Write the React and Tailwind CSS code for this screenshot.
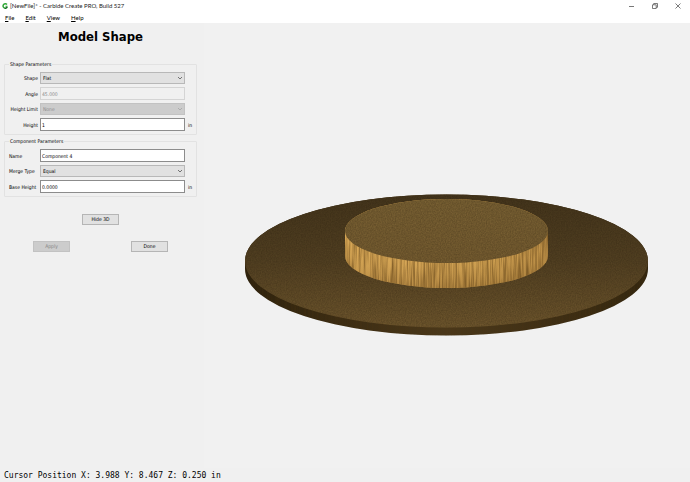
import React, { useState } from 'react';

const MENUS = ['File', 'Edit', 'View', 'Help'];

const fieldStyles =
  'h-[13px] w-full min-w-0 rounded-none border border-[#8c8c8c] bg-white px-px text-[5px] leading-[11px] text-black disabled:border-[#d4d4d4] disabled:bg-[#f0f0f0] disabled:text-[#8a8a8a]';

const Group = ({ title, children }) => (
  <fieldset className="min-w-0 rounded-[1px] border border-[#e2e2e2] px-1 pb-[3px]">
    <legend className="px-px text-[5px] leading-2">{title}</legend>
    <div className="flex flex-col gap-[3px] pt-1">{children}</div>
  </fieldset>
);

const Row = ({ id, label, unit, alignRight, children }) => (
  <div className="grid grid-cols-[31px_1fr_7px] items-center text-[5px] leading-2">
    <label
      htmlFor={id}
      className={alignRight ? 'pr-[2px] text-right whitespace-nowrap' : 'whitespace-nowrap'}
    >
      {label}
    </label>
    {children}
    <span className="pl-[3px]">{unit}</span>
  </div>
);

const Dropdown = ({ id, options, disabled }) => (
  <div className="relative">
    <select
      id={id}
      disabled={disabled}
      className="block h-3 w-full appearance-none rounded-none border border-[#b8b8b8] bg-[#e1e1e1] px-[2px] text-[5px] leading-[10px] text-black disabled:border-[#c2c2c2] disabled:bg-[#cccccc] disabled:text-[#8c8c8c] disabled:opacity-100"
    >
      {options.map((option) => (
        <option key={option}>{option}</option>
      ))}
    </select>
    <svg
      viewBox="0 0 6 4"
      className="pointer-events-none absolute top-1 right-[2px] h-1 w-1.5"
      fill="none"
      stroke={disabled ? '#a5a5a5' : '#555555'}
      strokeWidth="0.8"
    >
      <path d="M1 1l2 2 2-2" />
    </svg>
  </div>
);

const PushButton = ({ children, disabled, onClick }) => (
  <button
    type="button"
    disabled={disabled}
    onClick={onClick}
    className="h-[11px] w-[37px] border border-[#b5b5b5] bg-[#e1e1e1] text-center text-[5px] leading-[9px] text-black disabled:border-[#c2c2c2] disabled:bg-[#cccccc] disabled:text-[#858585]"
  >
    {children}
  </button>
);

const TitleBar = () => (
  <header className="flex h-3 items-center bg-white text-[6px] leading-2">
    <svg viewBox="0 0 12 12" className="ml-[2px] h-1.5 w-1.5" fill="none" strokeWidth="3">
      <path d="M10 3A4.5 4.5 0 1 0 6 10.5" stroke="#2fa836" />
      <path d="M5.5 10.5A4.5 4.5 0 0 0 10.5 7.5" stroke="#126b25" />
      <path d="M7 6.5h4" stroke="#2fa836" strokeWidth="2" />
    </svg>
    <h1 className="ml-[2px] text-[#222222]">[NewFile]* - Carbide Create PRO, Build 527</h1>
    <div className="ml-auto flex">
      <button type="button" aria-label="Minimize" className="flex w-[23px] justify-center">
        <svg viewBox="0 0 6 6" className="h-1.5 w-1.5" fill="none" stroke="#555555">
          <path d="M0 3.5h5" strokeWidth="0.8" />
        </svg>
      </button>
      <button type="button" aria-label="Restore" className="flex w-[23px] justify-center">
        <svg viewBox="0 0 6 6" className="h-1.5 w-1.5" fill="none" stroke="#444444" strokeWidth="0.7">
          <path d="M0.5 1.8h3.7v3.7H0.5zM1.7 1.8V0.5h3.8v3.8H4.2" />
        </svg>
      </button>
      <button type="button" aria-label="Close" className="flex w-6 justify-center">
        <svg viewBox="0 0 6 6" className="h-1.5 w-1.5" fill="none" stroke="#444444" strokeWidth="0.7">
          <path d="M0.5 0.5l5 5M5.5 0.5l-5 5" />
        </svg>
      </button>
    </div>
  </header>
);

const MenuBar = () => (
  <nav className="flex h-[11px] items-center gap-[11px] bg-white pl-[5px] text-[6px] leading-2">
    {MENUS.map((menu) => (
      <button key={menu} type="button">
        <span className="underline">{menu[0]}</span>
        {menu.slice(1)}
      </button>
    ))}
  </nav>
);

const DISC_BODY = 'M41 238A201.5 66.5 0 0 1 444 238V246A201.5 66.5 0 0 1 41 246Z';
const BOSS_BODY = 'M141 208A101.5 32 0 0 1 344 208V233A101.5 32 0 0 1 141 233Z';

const ModelView = () => (
  <svg viewBox="0 0 486 445" className="h-full w-full" role="img" aria-label="3D model">
    <defs>
      <linearGradient id="discTop" x1="0" y1="0" x2="0" y2="1">
        <stop offset="0" stopColor="#44351c" />
        <stop offset="0.5" stopColor="#524022" />
        <stop offset="1" stopColor="#6e562d" />
      </linearGradient>
      <linearGradient id="discSide" x1="0" y1="0" x2="1" y2="0">
        <stop offset="0" stopColor="#2e220d" />
        <stop offset="0.5" stopColor="#4a381b" />
        <stop offset="1" stopColor="#33260f" />
      </linearGradient>
      <linearGradient id="bossTop" x1="0" y1="0" x2="0" y2="1">
        <stop offset="0" stopColor="#786033" />
        <stop offset="1" stopColor="#745b30" />
      </linearGradient>
      <linearGradient id="bossSide" x1="0" y1="0" x2="1" y2="0">
        <stop offset="0" stopColor="#d0a050" />
        <stop offset="0.3" stopColor="#dbaa58" />
        <stop offset="0.7" stopColor="#cfa050" />
        <stop offset="1" stopColor="#b0843f" />
      </linearGradient>
      <linearGradient id="bossShade" x1="0" y1="0" x2="0" y2="1">
        <stop offset="0.6" stopColor="#e5b562" stopOpacity="0.2" />
        <stop offset="1" stopColor="#7a5624" stopOpacity="0.4" />
      </linearGradient>
      <filter id="grain" x="0" y="0" width="1" height="1" colorInterpolationFilters="sRGB">
        <feTurbulence type="fractalNoise" baseFrequency="0.6 0.03" numOctaves="2" seed="4" />
        <feColorMatrix values="0 0 0 0 0.32  0 0 0 0 0.21  0 0 0 0 0.06  2 0 0 0 -0.7" />
        <feComposite in2="SourceGraphic" operator="in" />
      </filter>
      <filter id="speckle" x="0" y="0" width="1" height="1" colorInterpolationFilters="sRGB">
        <feTurbulence type="fractalNoise" baseFrequency="0.8 0.7" numOctaves="2" seed="9" />
        <feColorMatrix values="0 0 0 0 0.12  0 0 0 0 0.08  0 0 0 0 0.02  0.4 0 0 0 -0.09" />
        <feComposite in2="SourceGraphic" operator="in" />
      </filter>
    </defs>

    <path d={DISC_BODY} fill="url(#discSide)" />
    <path d={DISC_BODY} filter="url(#grain)" opacity="0.25" />
    <ellipse cx="242.5" cy="238" rx="201.5" ry="66.5" fill="url(#discTop)" />
    <ellipse cx="242.5" cy="238" rx="201.5" ry="66.5" filter="url(#speckle)" />

    <path d={BOSS_BODY} fill="url(#bossSide)" />
    <path d={BOSS_BODY} fill="url(#bossShade)" />
    <path d={BOSS_BODY} filter="url(#grain)" opacity="0.6" />
    <ellipse cx="242.5" cy="208" rx="101.5" ry="32" fill="url(#bossTop)" />
    <ellipse cx="242.5" cy="208" rx="101.5" ry="32" filter="url(#speckle)" />
  </svg>
);

export default function App() {
  const [height, setHeight] = useState('1');
  const [name, setName] = useState('Component 4');
  const [baseHeight, setBaseHeight] = useState('0.0000');
  const [show3d, setShow3d] = useState(true);

  return (
    <div className="flex min-h-screen flex-col bg-[#f0f0f0] font-[Lato,sans-serif] text-black">
      <TitleBar />
      <MenuBar />

      <main className="flex flex-1">
        <aside className="w-[204px] shrink-0 pr-[7px] pl-1 font-['DejaVu_Sans_Condensed','DejaVu_Sans',sans-serif]">
          <h2 className="pt-[5px] pb-[14px] text-center text-[13px] leading-[18px] font-bold">
            Model Shape
          </h2>

          <div className="flex flex-col gap-[2px]">
            <Group title="Shape Parameters">
              <Row id="shape" label="Shape" alignRight>
                <Dropdown id="shape" options={['Flat', 'Angle', 'Round']} />
              </Row>
              <Row id="angle" label="Angle" alignRight>
                <input id="angle" className={fieldStyles} value="45.000" disabled readOnly />
              </Row>
              <Row id="limit" label="Height Limit" alignRight>
                <Dropdown id="limit" options={['None']} disabled />
              </Row>
              <Row id="height" label="Height" unit="in" alignRight>
                <input
                  id="height"
                  className={fieldStyles}
                  value={height}
                  onChange={(e) => setHeight(e.target.value)}
                />
              </Row>
            </Group>

            <Group title="Component Parameters">
              <Row id="name" label="Name">
                <input
                  id="name"
                  className={fieldStyles}
                  value={name}
                  onChange={(e) => setName(e.target.value)}
                />
              </Row>
              <Row id="merge" label="Merge Type">
                <Dropdown id="merge" options={['Equal', 'Add', 'Subtract']} />
              </Row>
              <Row id="base" label="Base Height" unit="in">
                <input
                  id="base"
                  className={fieldStyles}
                  value={baseHeight}
                  onChange={(e) => setBaseHeight(e.target.value)}
                />
              </Row>
            </Group>
          </div>

          <div className="flex justify-center pt-[17px]">
            <PushButton onClick={() => setShow3d(!show3d)}>
              {show3d ? 'Hide 3D' : 'Show 3D'}
            </PushButton>
          </div>
          <div className="flex justify-between px-[29px] pt-4">
            <PushButton disabled>Apply</PushButton>
            <PushButton>Done</PushButton>
          </div>
        </aside>

        <section className="min-w-0 flex-1 bg-[#f1f1f1]">{show3d && <ModelView />}</section>
      </main>

      <footer className="h-[14px] pt-px pl-1 font-['DejaVu_Sans_Mono',monospace] text-[8px] leading-[13px] whitespace-pre">
        Cursor Position X: 3.988 Y: 8.467 Z: 0.250 in
      </footer>
    </div>
  );
}
